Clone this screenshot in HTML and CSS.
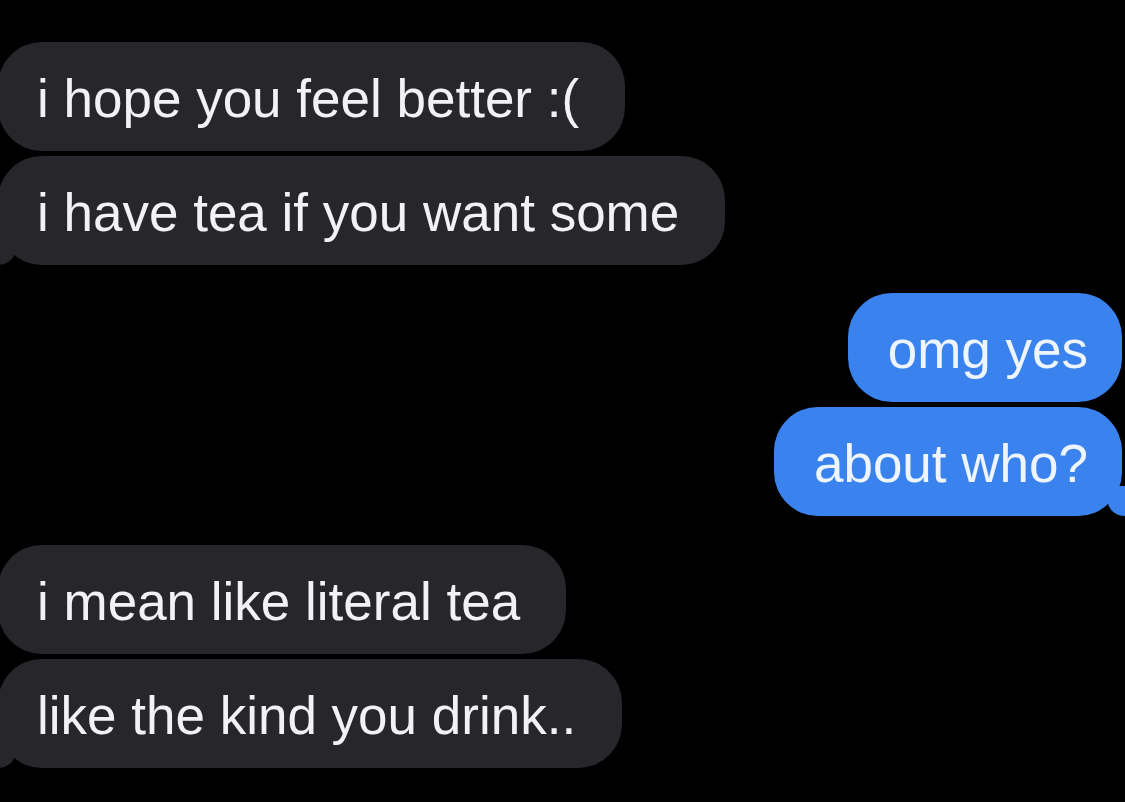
FILE: index.html
```html
<!DOCTYPE html>
<html lang="en">
<head>
<meta charset="utf-8">
<title>Messages</title>
<link rel="stylesheet" href="styles.css">
</head>
<body>
<main class="thread">
  <section class="group group-them">
    <div class="bubble them">i hope you feel better :(</div>
    <div class="bubble them tail">i have tea if you want some</div>
  </section>
  <section class="group group-me">
    <div class="bubble me">omg yes</div>
    <div class="bubble me tail">about who?</div>
  </section>
  <section class="group group-them">
    <div class="bubble them">i mean like literal tea</div>
    <div class="bubble them tail">like the kind you drink..</div>
  </section>
</main>
</body>
</html>
```
FILE: styles.css
```css
html, body {
  margin: 0;
  padding: 0;
  background: #000;
}
body {
  width: 1125px;
  height: 802px;
  overflow: hidden;
  font-family: "Liberation Sans", Arial, sans-serif;
}
.thread {
  display: flex;
  flex-direction: column;
  gap: 28px;
  padding: 42px 3px 0 0;
}
.group {
  display: flex;
  flex-direction: column;
  gap: 5px;
}
.group-them {
  align-items: flex-start;
  margin-left: -2px;
}
.group-me {
  align-items: flex-end;
}
.group-me + .group-them {
  margin-top: 1px;
}
.bubble {
  position: relative;
  box-sizing: border-box;
  height: 109px;
  padding-top: 4px;
  line-height: 105px;
  font-size: 53px;
  border-radius: 44px;
  white-space: nowrap;
}
.them {
  background: #27262b;
  color: #f2f2f4;
  padding-left: 39px;
  padding-right: 46px;
}
.me {
  background: #3a83ef;
  color: #eef5ff;
  padding-left: 40px;
  padding-right: 34px;
}
.tail::before {
  content: "";
  position: absolute;
  bottom: 0;
  width: 31px;
  height: 30px;
}
.them.tail::before {
  left: -14px;
  background: #27262b;
  border-bottom-right-radius: 18px 14px;
}
.me.tail::before {
  right: -17px;
  background: #3a83ef;
  border-bottom-left-radius: 18px 14px;
  border-top-right-radius: 12px 26px;
}
```
